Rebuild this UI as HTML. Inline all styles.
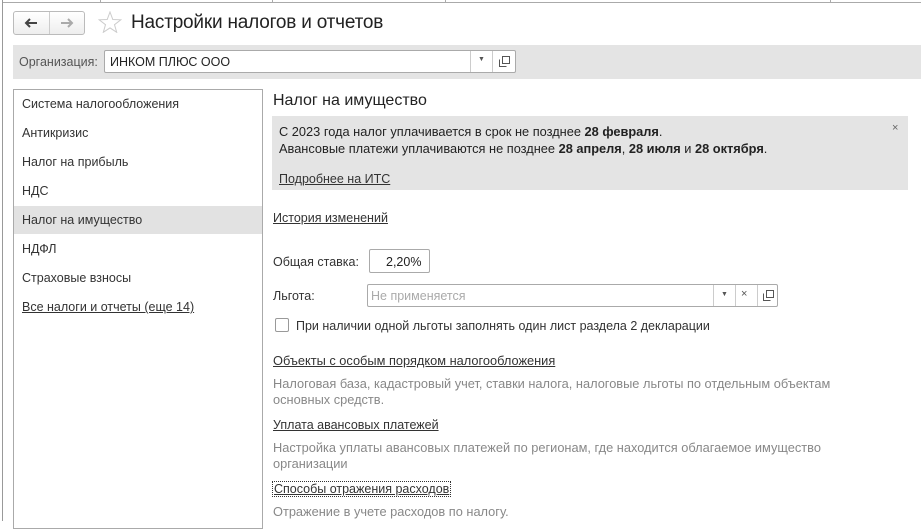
<!DOCTYPE html><html><head><meta charset="utf-8"><style>
*{box-sizing:border-box;margin:0;padding:0}
body{width:921px;height:521px;overflow:hidden;background:#fff;font-family:"Liberation Sans",Arial,sans-serif;font-size:12.5px;color:#333;position:relative}
.a{position:absolute;white-space:nowrap}
.u{text-decoration:underline}
.g{color:#888;font-size:12.8px}
</style></head><body>
<div class="a" style="left:0;top:0;width:3px;height:521px;border-right:1px solid #999"></div>
<div class="a" style="left:3px;top:2px;width:918px;border-top:1px solid #aaa"></div>
<div class="a" style="left:100px;top:0;height:3px;border-left:1px solid #aaa"></div>
<div class="a" style="left:272px;top:0;height:3px;border-left:1px solid #aaa"></div>
<div class="a" style="left:445px;top:0;height:3px;border-left:1px solid #aaa"></div>
<div class="a" style="left:830px;top:0;height:3px;border-left:1px solid #aaa"></div>
<div class="a" style="left:13px;top:11px;width:72px;height:24px;border:1px solid #bbb;border-radius:3px;background:linear-gradient(#fff,#eee)"></div>
<div class="a" style="left:49px;top:12px;height:22px;border-left:1px solid #ccc"></div>
<svg class="a" style="left:24px;top:17px" width="14" height="12"><path d="M13 6H2M6 2L2 6L6 10" stroke="#444" stroke-width="2" fill="none"/></svg>
<svg class="a" style="left:60px;top:17px" width="14" height="12"><path d="M1 6H12M8 2L12 6L8 10" stroke="#aaa" stroke-width="2" fill="none"/></svg>
<svg class="a" style="left:98px;top:11px" width="24" height="22"><path d="M12 1L14.8 8.5L22.8 8.8L16.5 13.7L18.7 21.3L12 16.9L5.3 21.3L7.5 13.7L1.2 8.8L9.2 8.5Z" stroke="#ccc" fill="none"/></svg>
<div class="a" style="left:131px;top:12px;font-size:19px;color:#222;letter-spacing:-0.2px">Настройки налогов и отчетов</div>
<div class="a" style="left:13px;top:45px;width:908px;height:34px;background:#e4e4e4"></div>
<div class="a" style="left:19px;top:55px;color:#555">Организация:</div>
<div class="a" style="left:104px;top:50px;width:412px;height:23px;border:1px solid #aaa;border-radius:2px;background:#fff"></div>
<div class="a" style="left:110px;top:55px;color:#222">ИНКОМ ПЛЮС ООО</div>
<div class="a" style="left:470px;top:51px;height:21px;border-left:1px solid #ccc"></div>
<div class="a" style="left:478px;top:56px;font-size:7px;color:#555">▼</div>
<div class="a" style="left:492px;top:51px;height:21px;border-left:1px solid #ccc"></div>
<svg class="a" style="left:499px;top:56px" width="11" height="11"><path d="M3.5 0.5H10.5V7.5H3.5ZM0.5 3.5V10.5H7.5" stroke="#555" fill="none"/></svg>
<div class="a" style="left:13px;top:89px;width:250px;height:440px;border:1px solid #aaa"></div>
<div class="a" style="left:14px;top:206px;width:248px;height:28px;background:#e2e2e2"></div>
<div class="a" style="left:22px;top:97px">Система налогообложения</div>
<div class="a" style="left:22px;top:126px">Антикризис</div>
<div class="a" style="left:22px;top:155px">Налог на прибыль</div>
<div class="a" style="left:22px;top:184px">НДС</div>
<div class="a" style="left:22px;top:213px">Налог на имущество</div>
<div class="a" style="left:22px;top:242px">НДФЛ</div>
<div class="a" style="left:22px;top:271px">Страховые взносы</div>
<div class="a u" style="left:22px;top:300px">Все налоги и отчеты (еще 14)</div>
<div class="a" style="left:273px;top:92px;font-size:16px;color:#222">Налог на имущество</div>
<div class="a" style="left:272px;top:116px;width:636px;height:74px;background:#e4e4e4"></div>
<div class="a" style="left:279px;top:123px;line-height:17px;color:#222;font-size:12.8px">С 2023 года налог уплачивается в срок не позднее <b>28 февраля</b>.<br>Авансовые платежи уплачиваются не позднее <b>28 апреля</b>, <b>28 июля</b> и <b>28 октября</b>.</div>
<div class="a" style="left:892px;top:122px;font-size:11px;color:#666">×</div>
<div class="a u" style="left:279px;top:172px">Подробнее на ИТС</div>
<div class="a u" style="left:273px;top:211px">История изменений</div>
<div class="a" style="left:273px;top:255px">Общая ставка:</div>
<div class="a" style="left:369px;top:249px;width:61px;height:24px;border:1px solid #aaa;border-radius:2px"></div>
<div class="a" style="left:386px;top:255px;color:#222">2,20%</div>
<div class="a" style="left:273px;top:289px">Льгота:</div>
<div class="a" style="left:367px;top:284px;width:411px;height:23px;border:1px solid #aaa;border-radius:2px"></div>
<div class="a" style="left:371px;top:289px;color:#aaa">Не применяется</div>
<div class="a" style="left:713px;top:285px;height:21px;border-left:1px solid #ccc"></div>
<div class="a" style="left:721px;top:291px;font-size:7px;color:#555">▼</div>
<div class="a" style="left:735px;top:285px;height:21px;border-left:1px solid #ccc"></div>
<div class="a" style="left:741px;top:288px;font-size:11px;color:#555">×</div>
<div class="a" style="left:757px;top:285px;height:21px;border-left:1px solid #ccc"></div>
<svg class="a" style="left:763px;top:290px" width="11" height="11"><path d="M3.5 0.5H10.5V7.5H3.5ZM0.5 3.5V10.5H7.5" stroke="#555" fill="none"/></svg>
<div class="a" style="left:275px;top:318px;width:14px;height:14px;border:1px solid #999;border-radius:2px"></div>
<div class="a" style="left:296px;top:319px">При наличии одной льготы заполнять один лист раздела 2 декларации</div>
<div class="a u" style="left:273px;top:353px;font-size:12.8px">Объекты с особым порядком налогообложения</div>
<div class="a g" style="left:273px;top:376px;line-height:16px">Налоговая база, кадастровый учет, ставки налога, налоговые льготы по отдельным объектам<br>основных средств.</div>
<div class="a u" style="left:273px;top:418px">Уплата авансовых платежей</div>
<div class="a g" style="left:273px;top:440px;line-height:16px">Настройка уплаты авансовых платежей по регионам, где находится облагаемое имущество<br>организации</div>
<div class="a u" style="left:272px;top:481px;padding:0 1px;border:1px dotted #333">Способы отражения расходов</div>
<div class="a g" style="left:273px;top:504px">Отражение в учете расходов по налогу.</div>
</body></html>
